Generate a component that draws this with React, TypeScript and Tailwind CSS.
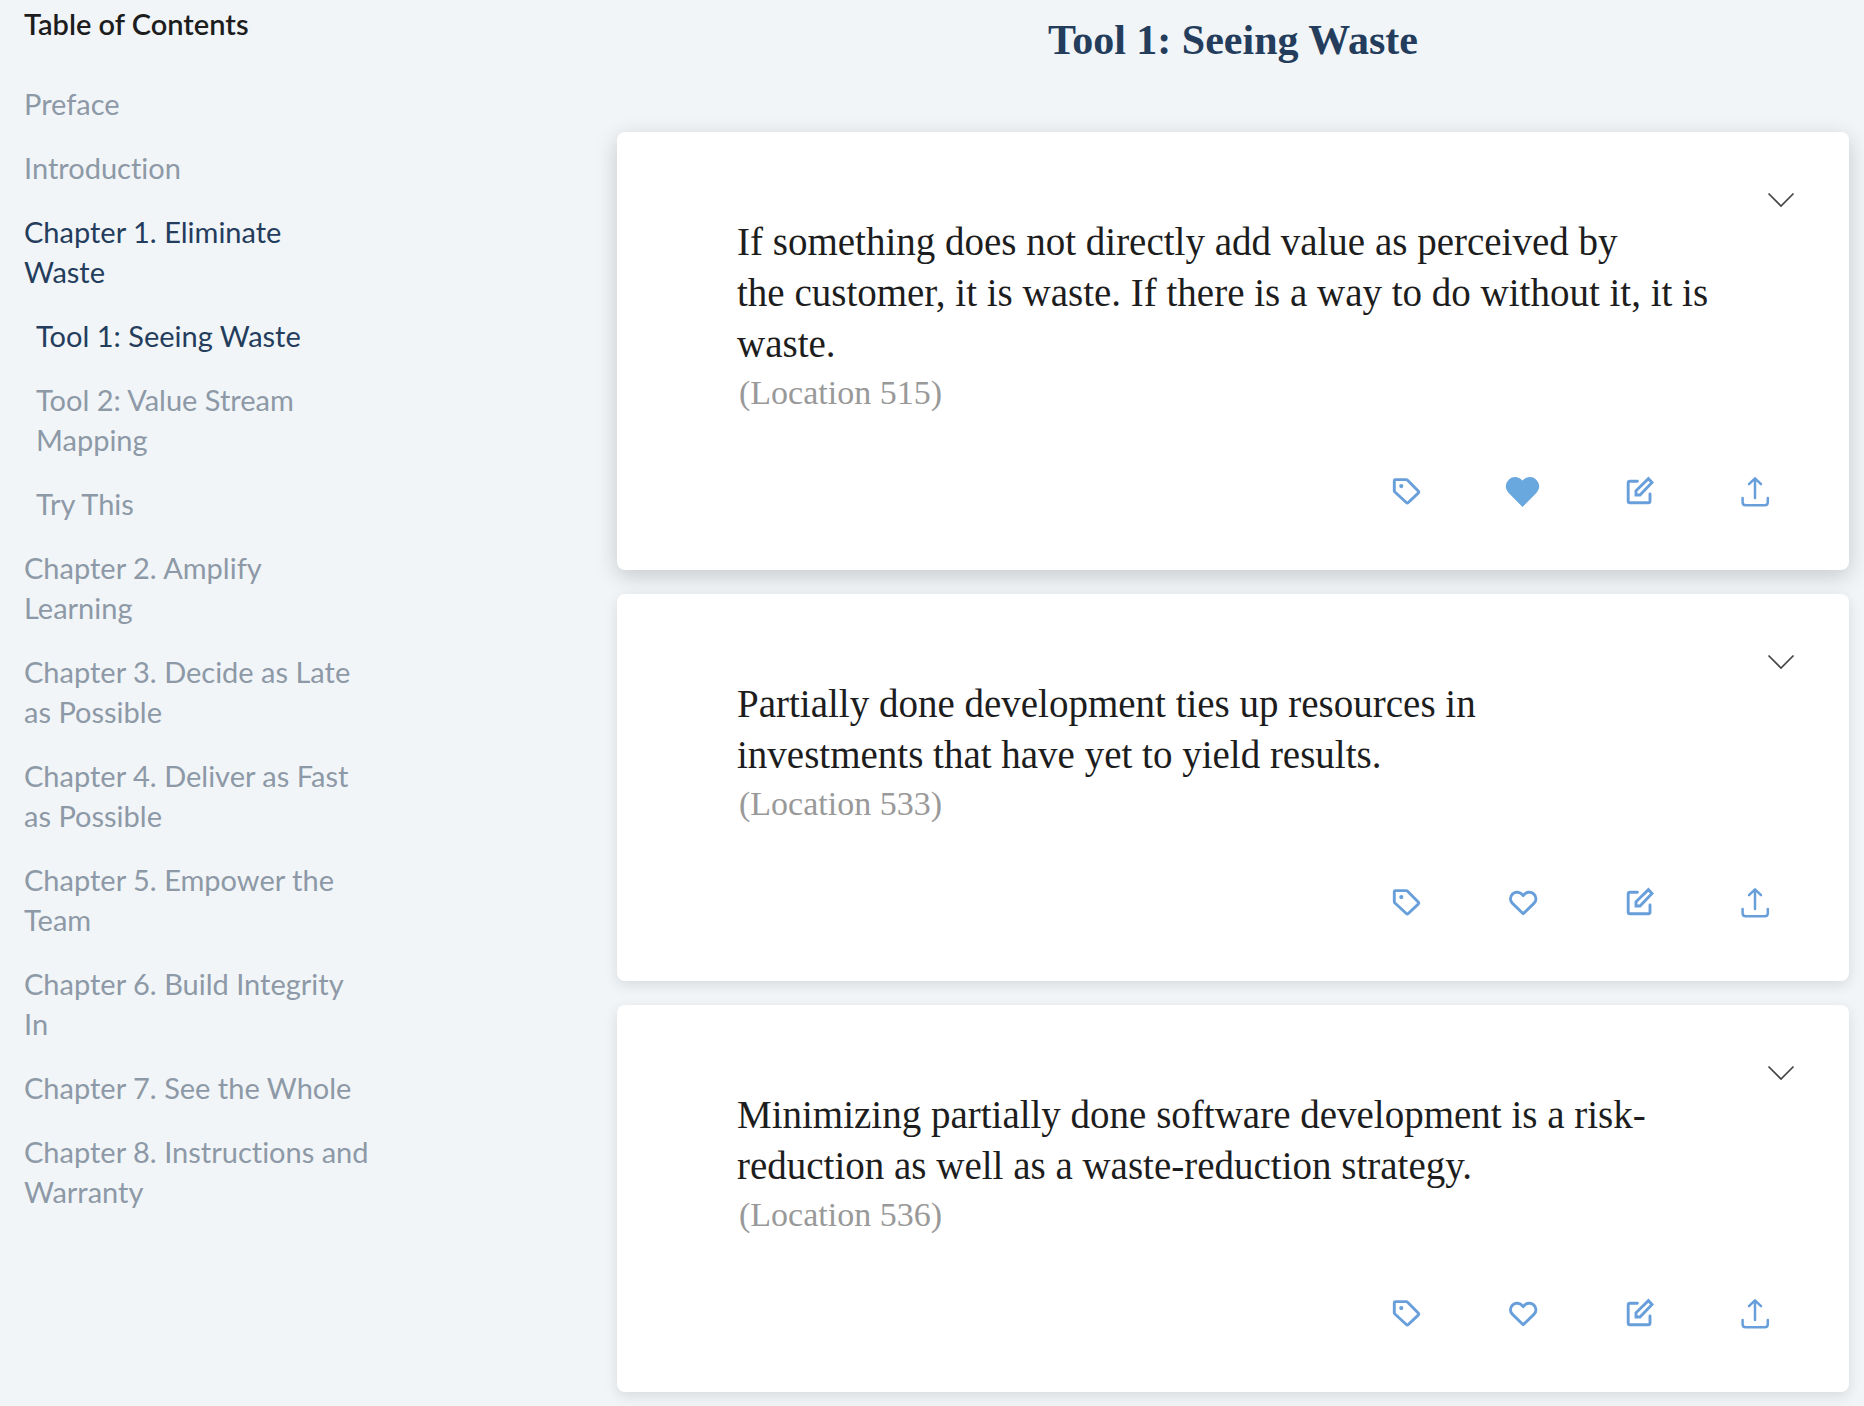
import { useState } from "react";
import type { ReactNode } from "react";

type TocEntry = { title: string; nested?: boolean; active?: boolean };
type Highlight = { text: string; location: number; liked: boolean };

const toc: TocEntry[] = [
  { title: "Preface" },
  { title: "Introduction" },
  { title: "Chapter 1. Eliminate\nWaste", active: true },
  { title: "Tool 1: Seeing Waste", nested: true, active: true },
  { title: "Tool 2: Value Stream\nMapping", nested: true },
  { title: "Try This", nested: true },
  { title: "Chapter 2. Amplify\nLearning" },
  { title: "Chapter 3. Decide as Late\nas Possible" },
  { title: "Chapter 4. Deliver as Fast\nas Possible" },
  { title: "Chapter 5. Empower the\nTeam" },
  { title: "Chapter 6. Build Integrity\nIn" },
  { title: "Chapter 7. See the Whole" },
  { title: "Chapter 8. Instructions and\nWarranty" },
];

const highlights: Highlight[] = [
  {
    text: "If something does not directly add value as perceived by\nthe customer, it is waste. If there is a way to do without it, it is\nwaste.",
    location: 515,
    liked: true,
  },
  {
    text: "Partially done development ties up resources in\ninvestments that have yet to yield results.",
    location: 533,
    liked: false,
  },
  {
    text: "Minimizing partially done software development is a risk-\nreduction as well as a waste-reduction strategy.",
    location: 536,
    liked: false,
  },
];

function Icon({ children, thin }: { children: ReactNode; thin?: boolean }) {
  return (
    <svg
      viewBox="0 0 36 36"
      className="size-9"
      fill="none"
      stroke="currentColor"
      strokeWidth={thin ? 2.5 : 2.9}
      strokeLinecap="round"
      strokeLinejoin="round"
      aria-hidden="true"
    >
      {children}
    </svg>
  );
}

function TagIcon() {
  return (
    <Icon>
      <path d="M5.3 6.6Q5.3 5.6 6.3 5.6H17.2Q18 5.6 18.6 6.2L29.2 17.1Q30.2 18.1 29.2 19.1L19.3 28.5Q18.3 29.4 17.3 28.5L5.9 18Q5.3 17.4 5.3 16.8Z" />
      <circle cx="12.3" cy="12.1" r="2.1" fill="currentColor" stroke="none" />
    </Icon>
  );
}

function HeartIcon({ filled }: { filled: boolean }) {
  return (
    <Icon>
      {filled ? (
        <path
          fill="currentColor"
          stroke="none"
          d="M17.5 6.6C21.5 2 27.5 2 31 5.4C35.2 9.5 35.2 15 31.3 19L17.5 33L3.7 19C-.2 15-.2 9.5 4 5.4C7.5 2 13.5 2 17.5 6.6Z"
        />
      ) : (
        <path d="M18.2 10.6C21.2 6.6 25.8 6.3 28.7 8.9C31.7 11.8 31.7 15.6 28.9 18.4L18.2 28.8L7.5 18.4C4.7 15.6 4.7 11.8 7.7 8.9C10.6 6.3 15.2 6.6 18.2 10.6Z" />
      )}
    </Icon>
  );
}

function EditIcon() {
  return (
    <Icon>
      <path d="M16.4 7.2H9Q7.2 7.2 7.2 9V27Q7.2 28.8 9 28.8H27.2Q29 28.8 29 27V20" />
      <path d="M15 21V16.8L27.4 4.7L31 8.6L19 21Z" strokeLinejoin="miter" />
    </Icon>
  );
}

function ShareIcon() {
  return (
    <Icon thin>
      <path d="M18 4.5V24M12 10.2L18 4.3L24 10.2" />
      <path d="M5.6 24V28.2Q5.6 31.2 8.6 31.2H27.8Q30.8 31.2 30.8 28.2V24" />
    </Icon>
  );
}

function HighlightCard({ highlight, raised }: { highlight: Highlight; raised: boolean }) {
  const [liked, setLiked] = useState(highlight.liked);
  return (
    <article
      className={
        raised
          ? "relative rounded-lg bg-white pt-[84px] pr-[76px] pb-[60px] pl-[120px] shadow-[0_6px_22px_rgba(0,0,0,0.18)]"
          : "relative rounded-lg bg-white pt-[84px] pr-[76px] pb-[60px] pl-[120px] shadow-[0_4px_14px_rgba(0,0,0,0.11)]"
      }
    >
      <button
        type="button"
        aria-label="More options"
        className="absolute top-[50px] right-[50px] flex size-9 items-center justify-center text-[#444]"
      >
        <svg viewBox="0 0 36 36" className="size-9" fill="none" stroke="currentColor" strokeWidth="1.7" aria-hidden="true">
          <path d="M5.5 11.5L18 24L30.5 11.5" />
        </svg>
      </button>
      <p className="whitespace-pre-line text-[39px] leading-[51px] text-[#1d1d1d]">{highlight.text}</p>
      <p className="pl-0.5 text-[34px] leading-[48px] text-[#999]">(Location {highlight.location})</p>
      <div className="mt-[57px] flex justify-end gap-20 text-[#689fda]">
        <button type="button" aria-label="Tag">
          <TagIcon />
        </button>
        <button
          type="button"
          aria-label="Favorite"
          aria-pressed={liked}
          onClick={() => setLiked(!liked)}
          className={liked ? "text-[#68a8de]" : "text-[#689fda]"}
        >
          <HeartIcon filled={liked} />
        </button>
        <button type="button" aria-label="Edit">
          <EditIcon />
        </button>
        <button type="button" aria-label="Share">
          <ShareIcon />
        </button>
      </div>
    </article>
  );
}

export default function App() {
  return (
    <div className="flex min-h-screen bg-[#f1f5f8]">
      <nav
        aria-label="Table of Contents"
        className="w-[617px] shrink-0 pt-1 pl-6 font-[Lato,sans-serif] text-[29px] leading-10 [font-variant-ligatures:none]"
      >
        <h2 className="font-semibold text-[#1d1d1d]">Table of Contents</h2>
        <ul className="mt-10 flex flex-col gap-6">
          {toc.map((entry) => (
            <li key={entry.title} className={entry.nested ? "pl-3" : ""}>
              <a
                href="#highlights"
                className={
                  entry.active
                    ? "block whitespace-pre-line text-[#243d5c]"
                    : "block whitespace-pre-line text-[#8d99a6]"
                }
              >
                {entry.title}
              </a>
            </li>
          ))}
        </ul>
      </nav>
      <main id="highlights" className="min-w-0 flex-1 pr-[15px] pb-3.5 font-['Liberation_Serif',serif]">
        <h1 className="pt-4 pb-[68px] text-center text-[42px] leading-[48px] font-bold text-[#243d5c]">
          Tool 1: Seeing Waste
        </h1>
        <div className="flex flex-col gap-6">
          {highlights.map((h, i) => (
            <HighlightCard key={h.location} highlight={h} raised={i === 0} />
          ))}
        </div>
      </main>
    </div>
  );
}
